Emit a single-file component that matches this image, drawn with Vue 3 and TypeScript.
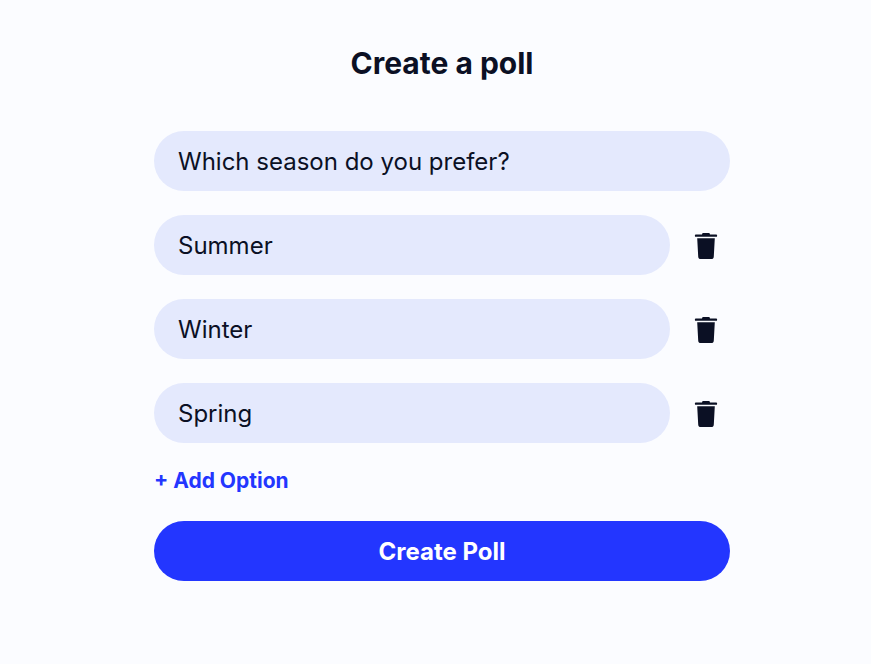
<script setup lang="ts">
const options: string[] = ['Summer', 'Winter', 'Spring']
</script>

<template>
  <main class="page">
    <h1 class="title">Create a poll</h1>
    <form class="form" @submit.prevent>
      <input class="field" type="text" value="Which season do you prefer?" />
      <div v-for="opt in options" :key="opt" class="row">
        <input class="field grow" type="text" :value="opt" />
        <button type="button" class="trash" aria-label="Delete">
          <svg width="30" height="30" viewBox="0 0 30 30" fill="#0b1024">
            <path d="M11.6 3h6.8l.6 1.4h6.2a.9.9 0 0 1 .9.9v.6a.9.9 0 0 1-.9.9H4.8a.9.9 0 0 1-.9-.9v-.6a.9.9 0 0 1 .9-.9H11z" />
            <path d="M6.2 8.2h17.6l-1 18.2a2.7 2.7 0 0 1-2.7 2.6H9.9a2.7 2.7 0 0 1-2.7-2.6z" />
          </svg>
        </button>
      </div>
      <button type="button" class="add">+ Add Option</button>
      <button type="submit" class="submit">Create Poll</button>
    </form>
  </main>
</template>

<style>
html, body { margin: 0; background: #fbfcff; }
</style>

<style scoped>
.page {
  box-sizing: border-box;
  height: 664px;
  padding: 44px 0 0 13px;
  font-family: Inter, "Liberation Sans", sans-serif;
  color: #0b1024;
  display: flex;
  flex-direction: column;
  align-items: center;
}
.title {
  margin: 0;
  font-size: 30px;
  line-height: 38px;
  font-weight: 700;
}
.form {
  width: 576px;
  margin-top: 49px;
  display: flex;
  flex-direction: column;
  gap: 24px;
}
.row {
  display: flex;
  align-items: center;
  gap: 12px;
}
.field {
  box-sizing: border-box;
  min-width: 0;
  width: 100%;
  height: 60px;
  padding: 0 24px;
  border: 0;
  border-radius: 30px;
  background: #e4e9fd;
  font: 400 24px Inter, "Liberation Sans", sans-serif;
  color: #0b1024;
  outline: none;
}
.grow {
  flex: 1;
}
.trash {
  flex: none;
  width: 48px;
  height: 48px;
  padding: 0;
  border: 0;
  background: none;
  display: flex;
  align-items: center;
  justify-content: center;
}
.add {
  align-self: flex-start;
  padding: 0;
  margin-bottom: 2px;
  border: 0;
  background: none;
  font: 700 21px/28px Inter, "Liberation Sans", sans-serif;
  color: #2336ff;
}
.submit {
  height: 60px;
  border: 0;
  border-radius: 30px;
  background: #2336ff;
  color: #fff;
  font: 700 24px Inter, "Liberation Sans", sans-serif;
}
</style>
